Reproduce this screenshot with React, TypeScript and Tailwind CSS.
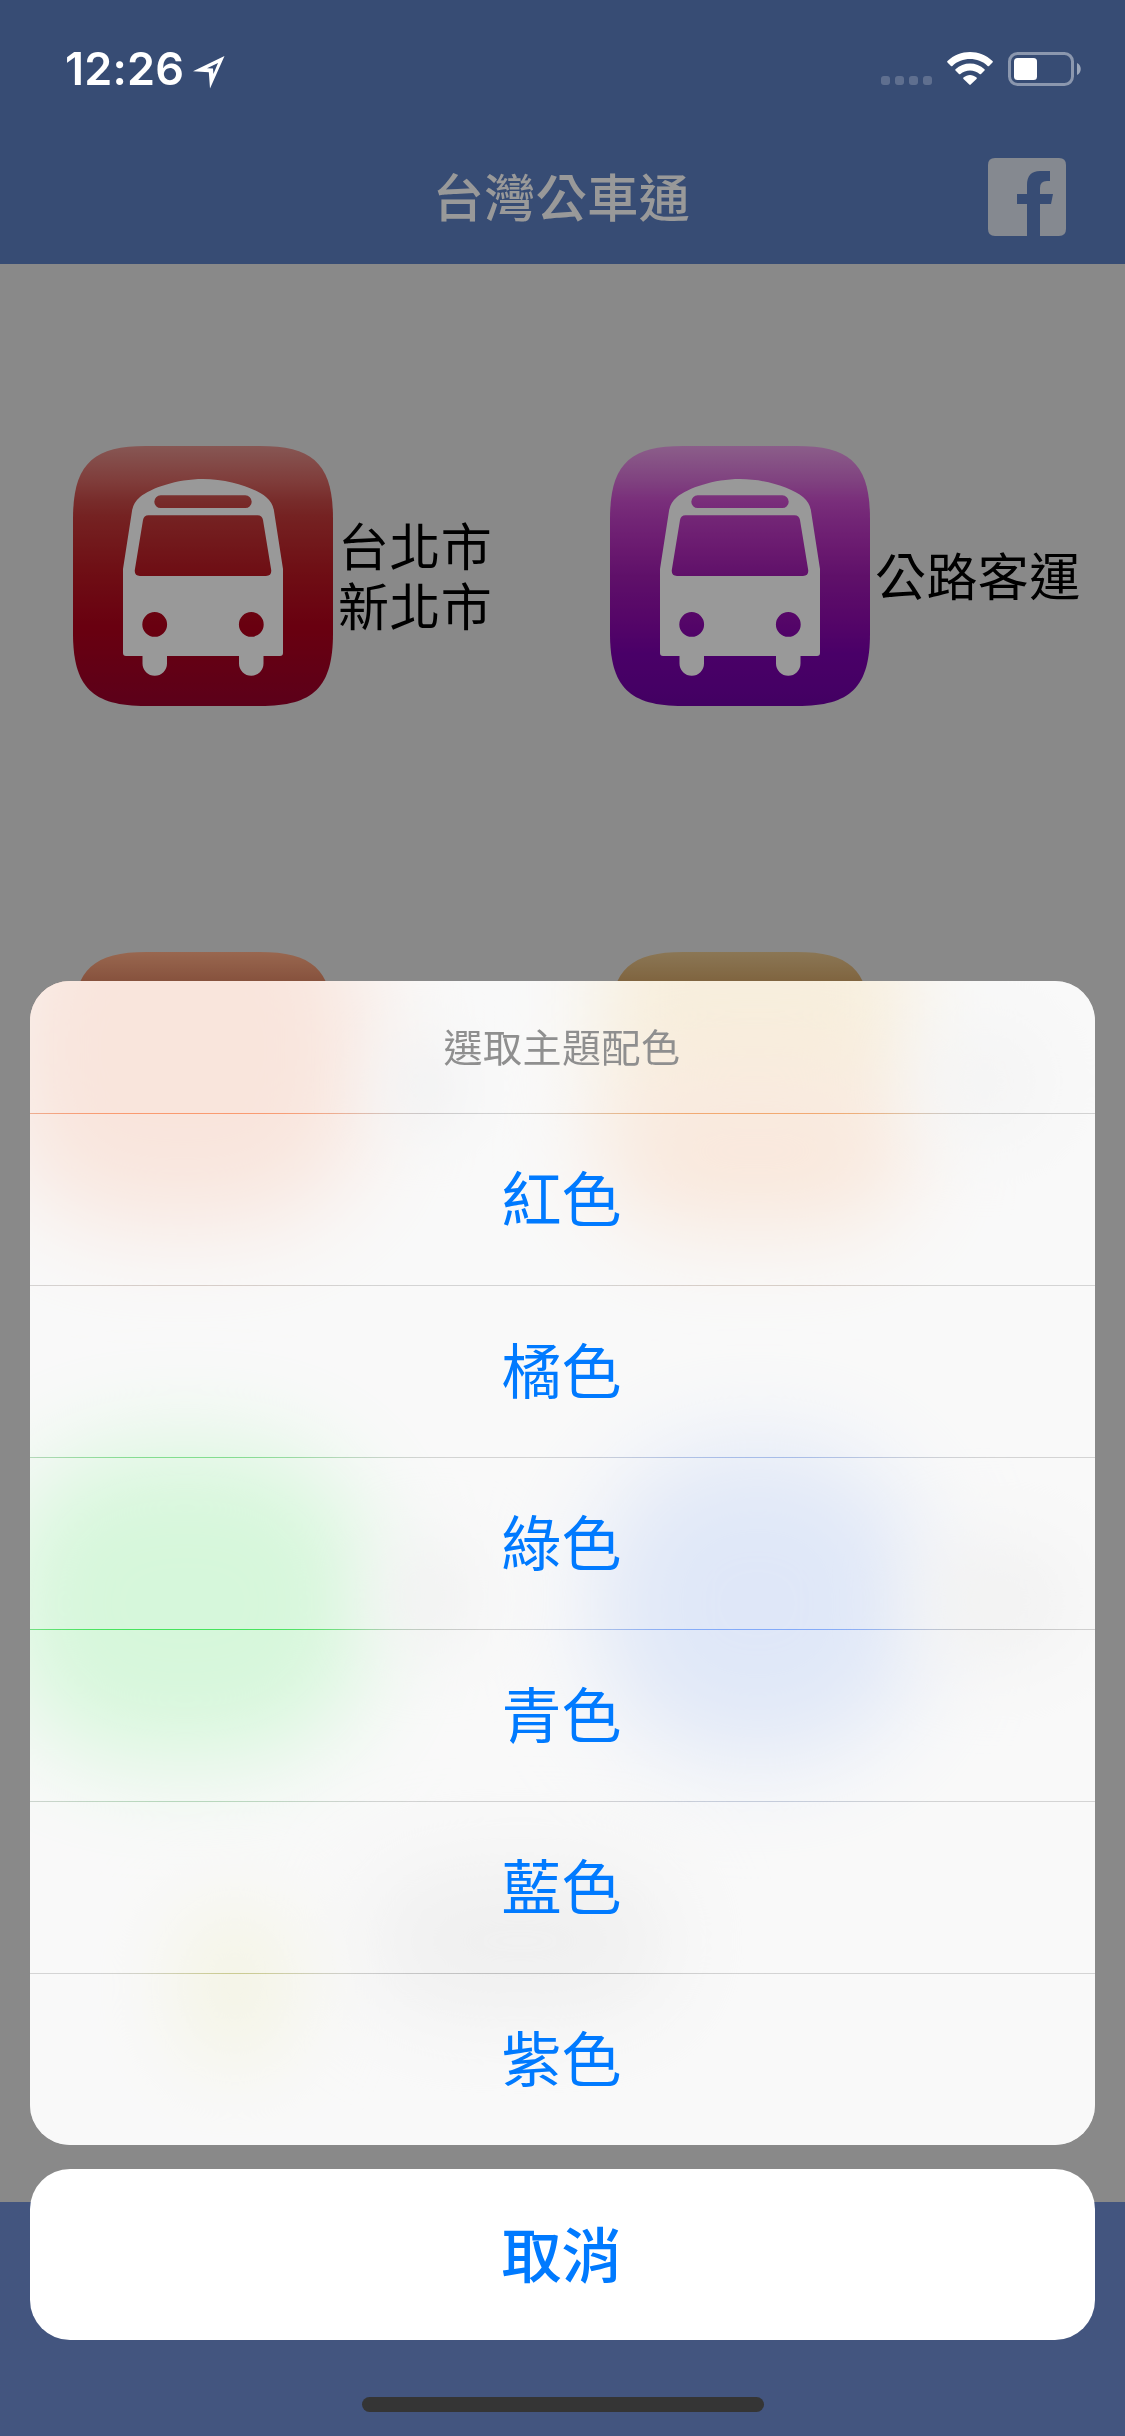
import { FC } from 'react';

interface RouteTile {
  id: string;
  label: string;
  stops: [number, string][];
}

const tiles: RouteTile[] = [
  {
    id: 'taipei',
    label: '台北市\n新北市',
    stops: [[0, '#e1918c'], [0.14, '#d46460'], [0.21, '#c84a48'], [0.27, '#c33939'], [0.48, '#b91923'], [0.7, '#af001b'], [1, '#99002b']],
  },
  {
    id: 'highway',
    label: '公路客運',
    stops: [[0, '#e89de6'], [0.14, '#d46cd4'], [0.21, '#cb4ecd'], [0.27, '#c141c6'], [0.4, '#b02ab9'], [0.5, '#9f1cb0'], [0.67, '#8e0aad'], [0.8, '#7b00ad'], [1, '#7000a5']],
  },
  { id: 'orange', label: '', stops: [[0, '#ffac85'], [0.11, '#e18967'], [1, '#d9502a']] },
  { id: 'yellow', label: '', stops: [[0, '#e8c68e'], [0.11, '#d5a86b'], [1, '#e08020']] },
];

const themes = ['紅色', '橘色', '綠色', '青色', '藍色', '紫色'];

const BusIcon: FC<{ tile: RouteTile }> = ({ tile }) => (
  <svg viewBox="0 0 260 260" className="size-[260px] shrink-0">
    <defs>
      <linearGradient id={tile.id} x1="0" y1="0" x2="0" y2="1">
        {tile.stops.map(([offset, color]) => (
          <stop key={offset} offset={offset} stopColor={color} />
        ))}
      </linearGradient>
    </defs>
    <path
      fill={`url(#${tile.id})`}
      d="M0 73C0 19 19 0 73 0H187C241 0 260 19 260 73V187C260 241 241 260 187 260H73C19 260 0 241 0 187Z"
    />
    <path
      fill="#fff"
      fillRule="evenodd"
      d="M130 33C156 33 182 42 193 51Q200 57 201 65L210 123V207Q210 210 207 210H190.500V217.500A12.200 12.200 0 0 1 166 217.500V210H94V217.500A12.200 12.200 0 0 1 69.500 217.500V210H53Q50 210 50 207V123L59 65Q60 57 67 51C78 42 104 33 130 33ZM87.700 49.300A6.400 6.400 0 0 0 87.700 62.100H172.300A6.400 6.400 0 0 0 172.300 49.300ZM75.500 69.300Q70.800 69.300 70 74L61.800 124Q61.200 130 67 130H193Q198.800 130 198.200 124L190 74Q189.200 69.300 184.500 69.300ZM81.700 166A12.400 12.400 0 1 0 81.700 190.800A12.400 12.400 0 1 0 81.700 166ZM178.300 166A12.400 12.400 0 1 0 178.300 190.800A12.400 12.400 0 1 0 178.300 166Z"
    />
  </svg>
);

const StatusBar: FC = () => (
  <div className="absolute inset-x-0 top-0 z-20 flex items-start justify-between pt-[52px] pr-[44px] pl-[65px] text-white">
    <div className="flex items-start">
      <span className="w-[128px] font-[Inter] text-[45px] leading-[34px] font-semibold tracking-[0.2px]">12:26</span>
      <svg viewBox="0 0 32 33" className="mt-[4px] h-[33px] w-[32px]">
        <path
          fill="#fff"
          fillRule="evenodd"
          d="M31.500 0L17 32.500L15.800 16.200L0 15.200ZM25 7L14 12.200L20 12.600L20.400 18Z"
        />
      </svg>
    </div>
    <div className="flex items-start">
      <div className="mt-[24px] mr-[15px] flex gap-[5px]">
        {[0, 1, 2, 3].map((dot) => (
          <span key={dot} className="size-[9px] rounded-[3px] bg-white/20" />
        ))}
      </div>
      <svg viewBox="0 0 46 33" className="mr-[15px] h-[33px] w-[46px]" fill="#fff">
        <path d="M.5 9C13 -3 33 -3 45.500 9Q46.200 9.700 45.500 10.400L42 13.900Q41.300 14.500 40.600 13.900C31 4.800 15 4.800 5.400 13.900Q4.700 14.500 4 13.900L.5 10.400Q-.2 9.700 .5 9Z" />
        <path d="M8.500 17.200C16.500 9.500 29.500 9.500 37.500 17.200Q38.200 17.900 37.500 18.600L34 22Q33.300 22.600 32.600 22C27.500 17.200 18.500 17.200 13.400 22Q12.700 22.600 12 22L8.500 18.600Q7.800 17.900 8.500 17.200Z" />
        <path d="M16.500 25.600C20.500 22.200 25.500 22.200 29.500 25.600Q30.200 26.300 29.500 27L23.700 32.600Q23 33.200 22.300 32.600L16.500 27Q15.800 26.300 16.500 25.600Z" />
      </svg>
      <svg viewBox="0 0 73 34" className="h-[34px] w-[73px]">
        <rect x="1.500" y="1.500" width="63" height="31" rx="8" fill="none" stroke="#fff" strokeOpacity=".42" strokeWidth="3" />
        <rect x="6" y="6" width="23" height="22" rx="3.500" fill="#fff" />
        <path d="M69 11C74 13 74 21 69 23Z" fill="#fff" fillOpacity=".5" />
      </svg>
    </div>
  </div>
);

const ThemeSheet: FC = () => (
  <div className="relative overflow-hidden rounded-[40px] bg-[#f9f9f9]">
    <div className="absolute inset-0">
      <div className="absolute top-[-110px] left-[-30px] h-[355px] w-[365px] rounded-[130px] bg-[#f8bfa6] blur-[50px]" />
      <div className="absolute top-[-80px] left-[570px] h-[220px] w-[310px] rounded-[60px] bg-[#f4dba8] blur-[44px]" />
      <div className="absolute top-[90px] left-[570px] h-[160px] w-[310px] rounded-[80px] bg-[#fac8a6] blur-[48px]" />
      <div className="absolute top-[465px] left-[-30px] h-[315px] w-[370px] rounded-[140px] bg-[#96f3a3] blur-[50px]" />
      <div className="absolute top-[465px] left-[565px] h-[315px] w-[325px] rounded-[140px] bg-[#b0c7f5] blur-[50px]" />
      <div className="absolute top-[890px] left-[340px] h-[140px] w-[300px] rounded-full bg-[#dcdcdc] blur-[48px]" />
      <div className="absolute top-[920px] left-[140px] h-[170px] w-[130px] rounded-full bg-[#ebebc4] blur-[40px]" />
      <div className="absolute top-[60px] left-[350px] h-[90px] w-[90px] rounded-full bg-[#e6e6e8] blur-[30px]" />
      <div className="absolute top-[40px] left-[890px] h-[120px] w-[130px] rounded-full bg-[#ebebeb] blur-[36px]" />
      <div className="absolute top-[560px] left-[350px] h-[110px] w-[100px] rounded-full bg-[#e4e4e4] blur-[36px]" />
      <div className="absolute top-[560px] left-[890px] h-[120px] w-[160px] rounded-full bg-[#e4e4e4] blur-[40px]" />
    </div>
    <div className="relative flex flex-col">
      <h2 className="flex h-[132px] items-center justify-center bg-[#f9f9f9]/65 pr-[1px] pb-[3px] text-[39px] tracking-[0.5px] text-[#8f8f8f]">
        選取主題配色
      </h2>
      {themes.map((theme) => (
        <div key={theme}>
          <div className="h-px backdrop-brightness-85 backdrop-saturate-200" />
          <button className="flex h-[171px] w-full items-center justify-center bg-[#f9f9f9]/65 pr-[2px] pb-[7px] text-[60px] text-[#007aff]">
            {theme}
          </button>
        </div>
      ))}
    </div>
  </div>
);

const App: FC = () => {
  return (
    <div className="relative flex h-[2436px] w-[1125px] flex-col overflow-hidden bg-[#e5e5e5] font-['Noto_Sans_CJK_TC',sans-serif]">
      <StatusBar />

      <header className="flex h-[264px] shrink-0 items-end bg-[#5d7fc1] pb-[28px]">
        <div className="w-[137px]" />
        <h1 className="flex-1 pr-[2px] pb-[2px] text-center text-[51px] leading-[78px] font-medium tracking-[0.5px] text-white">台灣公車通</h1>
        <svg viewBox="0 0 78 78" className="mr-[59px] size-[78px]">
          <path
            fill="#dee4f0"
            d="M7 0H71Q78 0 78 7V71Q78 78 71 78H52V46H63L65 36H52V30Q52 23 59 23H62V13H52Q39 13 39 27V36H29V46H39V78H7Q0 78 0 71V7Q0 0 7 0Z"
          />
        </svg>
      </header>

      <main className="grid flex-1 grid-cols-[537px_1fr] content-start gap-y-[246px] overflow-hidden pt-[182px] pl-[73px]">
        {tiles.map((tile) => (
          <div key={tile.id} className="flex items-center">
            <BusIcon tile={tile} />
            <p className="ml-[5px] pb-[4px] text-[51px] leading-[60px] tracking-[0.4px] whitespace-pre text-black">{tile.label}</p>
          </div>
        ))}
      </main>

      <footer className="h-[234px] shrink-0 bg-[#708ed4]" />

      <div className="absolute inset-0 z-10 flex flex-col justify-end gap-[24px] bg-black/40 px-[30px] pb-[24px]">
        <ThemeSheet />
        <button className="h-[171px] shrink-0 rounded-[40px] bg-white pr-[2px] pb-[6px] text-[60px] leading-[165px] font-medium text-[#007aff]">
          取消
        </button>
        <div className="mx-auto mt-[33px] h-[15px] w-[402px] shrink-0 rounded-full bg-[#353535]" />
      </div>
    </div>
  );
};

export default App;
